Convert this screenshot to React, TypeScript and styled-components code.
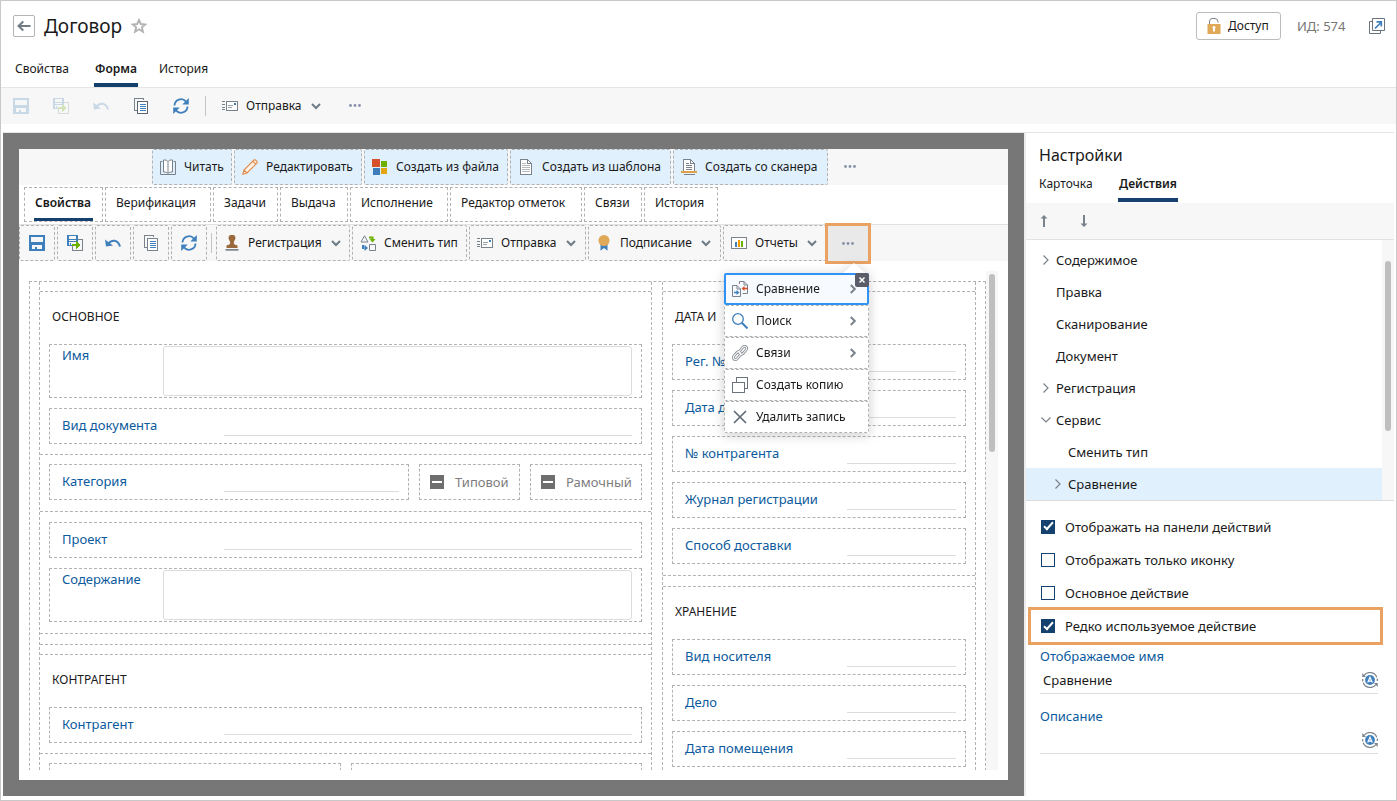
import React, { useState } from "react";
import styled, { createGlobalStyle, css } from "styled-components";

const Global = createGlobalStyle`
  *, *::before, *::after { box-sizing: border-box; }
  body { margin: 0; background: #fff; }
  body, button, input, textarea {
    font-family: "Noto Sans", "Open Sans", sans-serif;
    font-size: 13px;
    line-height: 18px;
    color: #1a1a1a;
  }
  h1, h2, h3, ul { margin: 0; padding: 0; font-weight: 400; }
  button { background: none; border: 0; padding: 0; cursor: pointer; }
`;

const dash = "1px dashed #b2b2b2";
const accent = "#14416d";
const mark = "#eaa263";
const gray = "#7a838b";
const blue = "#3f7fbb";

/* ---------- Icons ---------- */

const Svg = ({ size = 16, crisp, children }: { size?: number; crisp?: boolean; children: React.ReactNode }) => (
  <svg width={size} height={size} viewBox={`0 0 ${size} ${size}`} fill="none" aria-hidden="true" shapeRendering={crisp ? "crispEdges" : "auto"}>
    {children}
  </svg>
);

const SaveIcon = () => (
  <Svg crisp>
    <path fillRule="evenodd" fill={blue} d="M0 0H16V16H0ZM2 2V7H14V2ZM3 10V14H6V12H8V14H13V10Z" />
  </Svg>
);

const SaveNextIcon = () => (
  <Svg crisp>
    <path fillRule="evenodd" fill={blue} d="M0 0H11V7H9V5H2V6H9V7H2V10H5V11H0ZM2 1V4H9V1ZM3 8V10H4V8Z" />
    <path d="M10.500 4.500H15.500V15.500H5.500V11" stroke={gray} />
    <path fill="#6cb000" d="M5 9H9V6H10V7H11V8H12V9H13V11H12V12H11V13H10V14H9V11H5Z" />
  </Svg>
);

const UndoIcon = () => (
  <Svg>
    <path d="M3 9C6.500 4.200 13 4.200 15 11.500" stroke={blue} strokeWidth="2" />
    <path fill={blue} d="M0 4.500L1 11.500L8 10.500Z" />
  </Svg>
);

const CopyIcon = ({ filled }: { filled?: boolean }) => (
  <Svg crisp>
    <path d="M3.500 12.500H1.500V0.500H10.500V2" stroke={gray} />
    <path d="M4.500 3.500H14.500V15.500H4.500Z" fill="#fff" stroke={filled ? "#5b646c" : gray} />
    <path d="M7 6.500H13M7 8.500H13M7 10.500H13M7 12.500H13" stroke={blue} />
  </Svg>
);

const RefreshIcon = () => (
  <Svg>
    <path d="M1.500 7.500A6.500 6.500 0 0 1 13 3.600M14.500 8.500A6.500 6.500 0 0 1 3 12.400" stroke={blue} strokeWidth="1.800" />
    <path fill={blue} d="M15.800 0V6.500H9.300ZM0.200 16V9.500H6.700Z" />
  </Svg>
);

const SendIcon = () => (
  <Svg crisp>
    <path d="M0 3.500H3M0 6.500H3M0 9.500H3M0 11.500H3" stroke={gray} />
    <path d="M4.500 3.500H15.500V12.500H4.500Z" stroke={gray} fill="#fff" />
    <path d="M6 7.500H11M6 9.500H10" stroke="#9aa2a9" />
    <path d="M12 5H14V7H12Z" fill={blue} />
  </Svg>
);

const BookIcon = () => (
  <Svg>
    <path d="M2.500 2.500H0.500V15.500H15.500V2.500H13.500" stroke={gray} />
    <path d="M3.500 1C5.500 0.800 7.200 1.300 8 2.500C8.800 1.300 10.500 0.800 12.500 1V13C10.500 12.800 8.800 13.300 8 14.500C7.200 13.300 5.500 12.800 3.500 13Z" fill="#fff" stroke={gray} />
    <path d="M8 2.500V14.500" stroke={gray} />
  </Svg>
);

const PencilIcon = () => (
  <Svg>
    <path d="M0.800 15.200L2 11L12 1C13 0 15.800 2.800 15 4L5 14ZM2 11L5 14M11 2.500L13.800 5" stroke="#e08a4b" strokeWidth="1.100" fill="#fff3e6" />
  </Svg>
);

const FileTilesIcon = () => (
  <Svg crisp>
    <path fill="#d6502c" d="M0 0H8V8H0Z" />
    <path fill="#6cb000" d="M9 2H15V8H9Z" />
    <path fill="#3d7dbb" d="M1 9H8V16H1Z" />
    <path fill="#e2a612" d="M9 9H15V15H9Z" />
  </Svg>
);

const TemplateIcon = () => (
  <Svg crisp>
    <path d="M2.500 0.500H9.500L13.500 4.500V15.500H2.500Z" fill="#fff" stroke={gray} />
    <path d="M9.500 0.500V4.500H13.500" stroke={gray} />
    <path d="M4 4.500H8M4 6.500H12M4 8.500H12M4 10.500H12M4 12.500H12" stroke="#b3b9be" />
  </Svg>
);

const ScannerIcon = () => (
  <Svg crisp>
    <path d="M2.500 12V0.500H9.500L13.500 4.500V12M2.500 15.500H13.500" stroke={gray} fill="#fff" />
    <path d="M9.500 0.500V4.500H13.500" stroke={gray} />
    <path d="M5 4.500H8M5 6.500H11M5 8.500H11M5 10.500H11" stroke={gray} />
    <path fill="#e0a04a" d="M0 12H16V14H0Z" />
  </Svg>
);

const StampIcon = () => (
  <Svg>
    <path fill="#9b6a3c" d="M4.500 3A3 2.800 0 0 1 11.500 3C11.500 5 9.800 5.500 9.800 8C9.800 9.500 12 10 13.500 10.500V13H2.500V10.500C4 10 6.200 9.500 6.200 8C6.200 5.500 4.500 5 4.500 3Z" />
    <path fill={gray} d="M1.500 14H14.500V15.700H1.500Z" />
  </Svg>
);

const ChangeTypeIcon = () => (
  <Svg>
    <path d="M4.500 0.800L8 7H1Z" stroke={gray} />
    <path d="M9.500 9.500H15.500V15.500H9.500Z" stroke={gray} />
    <path d="M9 2.500H12.500V4.500" stroke="#6cb000" strokeWidth="2" />
    <path d="M9.500 4H15.500L12.500 7.500Z" fill="#6cb000" />
    <path d="M3 10V13H4.500" stroke={blue} strokeWidth="2" />
    <path d="M4.500 9.800V16L8 13Z" fill={blue} />
  </Svg>
);

const RibbonIcon = () => (
  <Svg>
    <path fill={blue} d="M4.500 9H11.500V15.800L8 13L4.500 15.800Z" />
    <circle cx="8" cy="5.500" r="5.500" fill="#e0a957" />
  </Svg>
);

const ReportIcon = () => (
  <Svg crisp>
    <path d="M0.500 2.500H15.500V13.500H0.500Z" fill="#fff" stroke={gray} />
    <path fill={blue} d="M4 7H6V12H4Z" />
    <path fill="#f19a00" d="M7 5H9V12H7Z" />
    <path fill="#6cb000" d="M10 6H12V12H10Z" />
  </Svg>
);

const CompareIcon = () => (
  <Svg>
    <path d="M0.500 4.500H5L8.500 8V15.500H0.500ZM5 4.500V8H8.500" stroke={gray} />
    <path d="M7.500 3V0.500H12L15.500 4V12.500H10.500M12 0.500V4H15.500" stroke={gray} />
    <path d="M2 11.500H5" stroke={blue} strokeWidth="1.600" />
    <path d="M4.500 9L7.500 11.500L4.500 14Z" fill={blue} />
    <path d="M12 7.500H16" stroke="#d6502c" strokeWidth="1.600" />
    <path d="M12.500 5L9.500 7.500L12.500 10Z" fill="#d6502c" />
  </Svg>
);

const SearchIcon = () => (
  <Svg>
    <circle cx="6" cy="6" r="5.300" stroke={blue} strokeWidth="1.300" />
    <path d="M9.800 9.800L15.500 15.500" stroke={blue} strokeWidth="2" />
  </Svg>
);

const LinkIcon = () => (
  <Svg>
    <g stroke="#8b9197" strokeWidth="2.800">
      <rect x="6.500" y="3.200" width="9" height="4.200" rx="2.100" transform="rotate(-50 11 5.300)" />
      <rect x="0.500" y="8.600" width="9" height="4.200" rx="2.100" transform="rotate(-50 5 10.700)" />
    </g>
    <g stroke="#fff" strokeWidth="1">
      <rect x="6.500" y="3.200" width="9" height="4.200" rx="2.100" transform="rotate(-50 11 5.300)" />
      <rect x="0.500" y="8.600" width="9" height="4.200" rx="2.100" transform="rotate(-50 5 10.700)" />
    </g>
  </Svg>
);

const DuplicateIcon = () => (
  <Svg crisp>
    <path d="M4.500 5V0.500H15.500V11.500H12M0.500 5.500H12.500V15.500H0.500Z" stroke="#6b747c" />
  </Svg>
);

const CrossIcon = () => (
  <Svg>
    <path d="M2 2L14 14M14 2L2 14" stroke="#5f6b75" strokeWidth="1.700" />
  </Svg>
);

const LockIcon = () => (
  <Svg>
    <path d="M3.500 6V4Q3.500 0.500 6 0.500H9Q12 0.500 12 4V4.500" stroke={gray} />
    <path fill="#e0a957" d="M1.500 6H14.500V16H1.500Z" />
    <path fill="#fff" d="M6.500 9.500A1.500 1.500 0 1 1 9 10.800V13.500H7V10.800Z" />
  </Svg>
);

const OpenIcon = () => (
  <Svg>
    <path d="M3 3.500H0.500V15.500H11.500V13M3.500 0.500H15.500V12.500H3.500Z" stroke="#6b747c" />
    <path d="M6 10.500L12 4.500M7.500 3.800H12.300V8.500" stroke={blue} strokeWidth="1.700" />
  </Svg>
);

const StarIcon = () => (
  <Svg>
    <path d="M8 2L9.800 6L14.200 6.500L10.900 9.300L11.900 13.700L8 11.300L4.100 13.700L5.100 9.300L1.800 6.500L6.200 6Z" stroke="#b3b3b3" strokeWidth="1.900" />
  </Svg>
);

const BackIcon = () => (
  <Svg>
    <path d="M2 8H14.500M7.300 3.500L2.500 8L7.300 12.500" stroke="#6f7b85" strokeWidth="2" />
  </Svg>
);

const ArrowIcon = ({ down }: { down?: boolean }) => (
  <svg width="8" height="12" viewBox="0 0 8 12" aria-hidden="true">
    <path fill={gray} d={down ? "M3 0H5V8.500H7.500L4 12L0.500 8.500H3Z" : "M3 12H5V3.500H7.500L4 0L0.500 3.500H3Z"} />
  </svg>
);

const LocalizeIcon = () => (
  <Svg>
    <circle cx="8" cy="8" r="4.900" fill={blue} />
    <path d="M5.700 10.500L8 5.300L10.300 10.500M6.600 9.200H9.400" stroke="#fff" strokeWidth="1.200" />
    <path d="M2 3.500A7.400 7.400 0 0 1 14.800 5.200M14 12.500A7.400 7.400 0 0 1 1.200 10.800M0.700 7V9.500M15.300 6.500V9" stroke={gray} strokeWidth="1.200" />
    <path fill={gray} d="M0.300 1V5H4ZM15.700 15V11H12Z" />
  </Svg>
);

const ChevronDown = () => (
  <svg width="12" height="8" viewBox="0 0 12 8" fill="none" aria-hidden="true">
    <path d="M2 2L6 6L10 2" stroke="#6f7b85" strokeWidth="2" />
  </svg>
);

const ChevronRight = ({ thin }: { thin?: boolean }) => (
  <svg width="8" height="12" viewBox="0 0 8 12" fill="none" aria-hidden="true">
    <path d={thin ? "M1.500 1.500L6 6L1.500 10.500" : "M1.800 2L5.800 6L1.800 10"} stroke={gray} strokeWidth={thin ? 1.2 : 2} />
  </svg>
);

const ThinDown = () => (
  <svg width="10" height="8" viewBox="0 0 10 8" fill="none" aria-hidden="true">
    <path d="M0.500 1.500L5 6L9.500 1.500" stroke={gray} strokeWidth="1.200" />
  </svg>
);

const Dots = () => (
  <svg width="12" height="4" viewBox="0 0 12 4" aria-hidden="true">
    <g fill="#8791a8">
      <circle cx="1.500" cy="1.500" r="1.400" />
      <circle cx="6" cy="1.500" r="1.400" />
      <circle cx="10.500" cy="1.500" r="1.400" />
    </g>
  </svg>
);

/* ---------- Page shell ---------- */

const Page = styled.div`
  height: 100vh;
  display: flex;
  flex-direction: column;
  border: 1px solid #c8c8c8;
`;

const Header = styled.header`
  display: flex;
  align-items: center;
  height: 50px;
  flex: none;
  padding: 0 11px 0 12px;
`;

const BackButton = styled.button`
  display: grid;
  place-items: center;
  width: 22px;
  height: 22px;
  border: 1px solid #b4b4b4;
  border-radius: 2px;
`;

const Title = styled.h1`
  margin: 0 9px;
  font-size: 19px;
  line-height: 28px;
`;

const IconOnly = styled.button`
  display: grid;
`;

const HeaderSide = styled.div`
  display: flex;
  align-items: center;
  margin-left: auto;
`;

const AccessButton = styled.button`
  display: flex;
  align-items: center;
  gap: 6px;
  height: 28px;
  width: 85px;
  padding-left: 9px;
  border: 1px solid #bcbcbc;
  border-radius: 3px;
  font-size: 12px;
`;

const RecordId = styled.span`
  width: 72px;
  margin-left: 16px;
  color: #757575;
`;

const NavTabs = styled.nav`
  display: flex;
  flex: none;
  gap: 21px;
  padding-left: 14px;
  height: 37px;
  border-bottom: 1px solid #e5e5e5;
`;

const NavTab = styled.button<{ $active?: boolean; $w?: number }>`
  width: ${(p) => p.$w}px;
  height: 36px;
  padding-top: ${(p) => (p.$active ? 4 : 0)}px;
  border-bottom: ${(p) => (p.$active ? `4px solid ${accent}` : "0")};
  text-align: ${(p) => (p.$active ? "center" : "left")};
  font-weight: ${(p) => (p.$active ? 600 : 400)};
  font-size: 12px;
  white-space: nowrap;
`;

const Toolbar = styled.div<{ $gap: number; $center?: boolean; $line?: boolean }>`
  display: flex;
  flex: none;
  align-items: stretch;
  justify-content: ${(p) => (p.$center ? "center" : "flex-start")};
  gap: ${(p) => p.$gap}px;
  height: ${(p) => (p.$line ? 37 : 36)}px;
  border-top: ${(p) => (p.$line ? "1px solid #e2e2e2" : "0")};
  background: #f7f7f7;
`;

const Separator = styled.span`
  width: 1px;
  height: 20px;
  margin: 0 2px;
  align-self: center;
  background: #c4c4c4;
`;

const PageToolbar = styled(Toolbar)`
  padding-left: 2px;
  ${Separator} { margin-right: 4px; }
`;

const ToolButton = styled.button<{ $w?: number; $dashed?: boolean; $primary?: boolean; $disabled?: boolean }>`
  display: flex;
  flex: none;
  align-items: center;
  justify-content: ${(p) => (p.$w ? "flex-start" : "center")};
  gap: 8px;
  width: ${(p) => p.$w ?? 36}px;
  padding: ${(p) => (p.$w ? "0 9px 0 7px" : "0")};
  border: 1px ${(p) => (p.$dashed ? "dashed #b2b2b2" : "solid transparent")};
  border-radius: 2px;
  background: ${(p) => (p.$primary ? "#e1f0fd" : "transparent")};
  font-size: 12px;
  white-space: nowrap;
  > svg { flex: none; opacity: ${(p) => (p.$disabled ? 0.25 : 1)}; }
  > svg:nth-of-type(2) { margin-left: auto; }
`;

const MoreButton = styled.button<{ $w?: number }>`
  display: flex;
  align-items: center;
  width: ${(p) => p.$w ?? 40}px;
  padding: 0 14px;
`;

const Workspace = styled.main`
  flex: 1;
  min-height: 0;
  display: flex;
  margin: 8px 2px 4px;
  border-top: 1px solid #e5e5e5;
`;

/* ---------- Designer ---------- */

const Designer = styled.section`
  flex: 1;
  min-width: 0;
  display: flex;
  padding: 16px;
  background: #777;
`;

const Sheet = styled.div`
  flex: 1;
  min-width: 0;
  display: flex;
  flex-direction: column;
  background: #fff;
`;

const CardTabs = styled.div`
  display: flex;
  flex: none;
  gap: 2px;
  height: 39px;
  padding: 2px 5px;
`;

const CardTab = styled.button<{ $w: number; $active?: boolean }>`
  position: relative;
  flex: none;
  width: ${(p) => p.$w}px;
  padding: 0 0 4px 10px;
  border: ${dash};
  text-align: left;
  font-size: 12px;
  font-weight: ${(p) => (p.$active ? 600 : 400)};
  white-space: nowrap;
  ${(p) => p.$active && css`
    &::after {
      content: "";
      position: absolute;
      left: 9px;
      right: 9px;
      bottom: 0;
      height: 3px;
      background: ${accent};
    }
  `}
`;

const MoreAnchor = styled.div`
  position: relative;
  display: flex;
  height: 35px;
  align-self: flex-end;
  background: #e9e9e9;
  outline: 3px solid ${mark};
`;

const Menu = styled.ul`
  position: absolute;
  z-index: 2;
  top: calc(100% + 12px);
  right: -1px;
  width: 145px;
  list-style: none;
  background: #fff;
  filter: drop-shadow(0 2px 6px rgba(0, 0, 0, 0.2));
  &::before {
    content: "";
    position: absolute;
    right: 4px;
    top: -10px;
    border: 11px solid transparent;
    border-top: 0;
    border-bottom: 10px solid #fff;
  }
`;

const MenuItem = styled.button<{ $selected?: boolean }>`
  position: relative;
  display: flex;
  align-items: center;
  gap: 8px;
  width: 100%;
  height: 32px;
  padding: ${(p) => (p.$selected ? "0 10px 0 6px" : "0 11px 0 7px")};
  border: ${(p) => (p.$selected ? "2px solid #2f92f5" : dash)};
  border-radius: 2px;
  background: ${(p) => (p.$selected ? "#f7fbff" : "#fff")};
  font-size: 12px;
  white-space: nowrap;
  > svg:nth-of-type(2) { margin-left: auto; }
`;

const MenuClose = styled.button`
  position: absolute;
  top: 0;
  right: 0;
  display: grid;
  place-items: center;
  width: 14px;
  height: 14px;
  border-radius: 2px;
  background: #5b5d6b;
`;

const ScrollArea = styled.div`
  flex: 1;
  min-height: 0;
  display: flex;
  margin: 10px;
`;

const Clip = styled.div`
  flex: 1;
  min-width: 0;
  overflow: hidden;
  padding-top: 10px;
`;

const Track = styled.div`
  width: 12px;
  flex: none;
  background: #f7f7f7;
`;

const Thumb = styled.div<{ $top: number; $h: number }>`
  width: 6px;
  height: ${(p) => p.$h}px;
  margin: ${(p) => p.$top}px 3px 0;
  border-radius: 3px;
  background: #bfbfbf;
`;

const FormCanvas = styled.form`
  display: grid;
  grid-template-columns: minmax(0, 1fr) 314px;
  gap: 10px;
  padding: 0 9px;
  border: ${dash};
`;

const Column = styled.div`
  padding-top: 9px;
  border: ${dash};
  border-width: 0 1px;
`;

const Group = styled.section<{ $top?: number; $bottom?: number }>`
  display: flex;
  flex-direction: column;
  gap: 10px;
  padding: ${(p) => p.$top ?? 0}px 9px ${(p) => p.$bottom ?? 11}px;
  border-top: ${dash};
`;

const Spacer = styled.div<{ $h: number }>`
  height: ${(p) => p.$h}px;
  border-top: ${dash};
`;

const GroupTitle = styled.h3`
  height: 42px;
  padding: 16px 3px 0;
  font-size: 12px;
  line-height: 18px;
`;

const FieldLine = styled.div`
  display: flex;
  gap: 10px;
`;

const Field = styled.div<{ $area?: boolean }>`
  width: 100%;
  min-width: 0;
  display: flex;
  height: ${(p) => (p.$area ? 54 : 36)}px;
  padding: ${(p) => (p.$area ? "1px 9px 1px 12px" : "0 9px 7px 12px")};
  border: ${dash};
`;

const FieldLabel = styled.label<{ $w: number; $area?: boolean }>`
  flex: none;
  width: ${(p) => p.$w}px;
  padding-top: ${(p) => (p.$area ? 0 : 7)}px;
  color: #0b5a9d;
  white-space: nowrap;
`;

const LineInput = styled.input`
  flex: 1;
  min-width: 0;
  padding: 0;
  border: 0;
  border-bottom: 1px solid #dcdcdc;
  background: none;
  outline: 0;
`;

const Area = styled.textarea`
  flex: 1;
  min-width: 0;
  border: 1px solid #dcdcdc;
  border-radius: 3px;
  resize: none;
  outline: 0;
`;

const TriState = styled.label<{ $w: number }>`
  display: flex;
  flex: none;
  align-items: center;
  gap: 11px;
  width: ${(p) => p.$w}px;
  height: 36px;
  padding-left: 10px;
  border: ${dash};
  color: #7d7d7d;
  white-space: nowrap;
`;

const TriBox = styled.input`
  appearance: none;
  display: grid;
  place-items: center;
  width: 14px;
  height: 14px;
  margin: 0;
  background: #6e6e6e;
  &::after { content: ""; width: 10px; height: 2px; background: #fff; }
`;

/* ---------- Settings ---------- */

const Settings = styled.aside`
  width: 370px;
  flex: none;
  display: flex;
  flex-direction: column;
  border-left: 2px solid #ececec;
`;

const SettingsTitle = styled.h2`
  height: 33px;
  padding: 11px 13px 0;
  font-size: 16px;
  line-height: 22px;
`;

const SettingsTabs = styled(NavTabs)`
  border: 0;
  padding-left: 13px;
`;

const OrderBar = styled.div`
  display: flex;
  flex: none;
  align-items: center;
  gap: 32px;
  height: 37px;
  padding-left: 14px;
  background: #f7f7f7;
  border-bottom: 1px solid #e2e2e2;
`;

const TreeArea = styled.div`
  display: flex;
  flex: none;
  border-bottom: 1px solid #dcdcdc;
`;

const Tree = styled.ul`
  flex: 1;
  padding-top: 4px;
  list-style: none;
`;

const TreeNode = styled.button<{ $level?: number; $selected?: boolean }>`
  display: flex;
  align-items: center;
  width: 100%;
  height: 32px;
  padding-left: ${(p) => 14 + (p.$level ?? 0) * 12}px;
  background: ${(p) => (p.$selected ? "#e1f0fd" : "none")};
`;

const TreeMark = styled.span`
  display: grid;
  place-items: center;
  width: 12px;
  margin-right: 4px;
`;

const Options = styled.div`
  display: flex;
  flex-direction: column;
  padding: 9px 11px 0 2px;
`;

const Option = styled.label<{ $marked?: boolean }>`
  display: flex;
  align-items: center;
  gap: 10px;
  height: ${(p) => (p.$marked ? 38 : 33)}px;
  margin-top: ${(p) => (p.$marked ? -2 : 0)}px;
  padding-left: ${(p) => (p.$marked ? 10 : 13)}px;
  border: ${(p) => (p.$marked ? `3px solid ${mark}` : "0")};
`;

const Check = styled.input`
  appearance: none;
  display: grid;
  place-items: center;
  width: 14px;
  height: 14px;
  margin: 0;
  border: 1px solid ${accent};
  &:checked { background: ${accent}; }
  &:checked::after {
    content: "";
    width: 5px;
    height: 10px;
    margin-top: -3px;
    border: solid #fff;
    border-width: 0 2px 2px 0;
    transform: rotate(42deg);
  }
`;

const Property = styled.div`
  display: flex;
  flex-direction: column;
  height: 60px;
  padding: 2px 16px 0 14px;
  > label { color: #0b5a9d; }
`;

const PropertyValue = styled.div`
  display: flex;
  align-items: center;
  height: 29px;
  padding: 2px 0 0 3px;
  border-bottom: 1px solid #dcdcdc;
  input { flex: 1; min-width: 0; border: 0; padding: 0; outline: 0; background: none; }
`;

/* ---------- Content ---------- */

const cardTabs: [string, number][] = [
  ["Свойства", 79], ["Верификация", 106], ["Задачи", 65], ["Выдача", 68],
  ["Исполнение", 98], ["Редактор отметок", 132], ["Связи", 58], ["История", 74],
];

const createActions: [string, number, React.ReactNode][] = [
  ["Читать", 80, <BookIcon />],
  ["Редактировать", 128, <PencilIcon />],
  ["Создать из файла", 144, <FileTilesIcon />],
  ["Создать из шаблона", 161, <TemplateIcon />],
  ["Создать со сканера", 155, <ScannerIcon />],
];

const cardActions: [string, number, React.ReactNode, boolean][] = [
  ["Регистрация", 134, <StampIcon />, true],
  ["Сменить тип", 115, <ChangeTypeIcon />, false],
  ["Отправка", 117, <SendIcon />, true],
  ["Подписание", 133, <RibbonIcon />, true],
  ["Отчеты", 103, <ReportIcon />, true],
];

const menuItems: [string, React.ReactNode, boolean][] = [
  ["Сравнение", <CompareIcon />, true],
  ["Поиск", <SearchIcon />, true],
  ["Связи", <LinkIcon />, true],
  ["Создать копию", <DuplicateIcon />, false],
  ["Удалить запись", <CrossIcon />, false],
];

const treeNodes: [string, number, React.ReactNode][] = [
  ["Содержимое", 0, <ChevronRight thin />],
  ["Правка", 0, null],
  ["Сканирование", 0, null],
  ["Документ", 0, null],
  ["Регистрация", 0, <ChevronRight thin />],
  ["Сервис", 0, <ThinDown />],
  ["Сменить тип", 1, null],
  ["Сравнение", 1, <ChevronRight thin />],
];

const FormField = ({ id, label, area, w = 162 }: { id: string; label: string; area?: boolean; w?: number }) => (
  <Field $area={area}>
    <FieldLabel htmlFor={id} $w={area ? 101 : w} $area={area}>{label}</FieldLabel>
    {area ? <Area id={id} /> : <LineInput id={id} type="text" />}
  </Field>
);

export default function App() {
  const [options, setOptions] = useState([
    { label: "Отображать на панели действий", on: true },
    { label: "Отображать только иконку", on: false },
    { label: "Основное действие", on: false },
    { label: "Редко используемое действие", on: true, marked: true },
  ]);
  const toggle = (i: number) => setOptions(options.map((o, n) => (n === i ? { ...o, on: !o.on } : o)));

  return (
    <Page>
      <Global />
      <Header>
        <BackButton aria-label="Назад"><BackIcon /></BackButton>
        <Title>Договор</Title>
        <IconOnly aria-label="В избранное"><StarIcon /></IconOnly>
        <HeaderSide>
          <AccessButton><LockIcon />Доступ</AccessButton>
          <RecordId>ИД: 574</RecordId>
          <IconOnly aria-label="Открыть в новом окне"><OpenIcon /></IconOnly>
        </HeaderSide>
      </Header>
      <NavTabs>
        <NavTab $w={58}>Свойства</NavTab>
        <NavTab $w={44} $active>Форма</NavTab>
        <NavTab $w={50}>История</NavTab>
      </NavTabs>
      <PageToolbar $gap={4}>
        <ToolButton $disabled aria-label="Сохранить"><SaveIcon /></ToolButton>
        <ToolButton $disabled aria-label="Сохранить и закрыть"><SaveNextIcon /></ToolButton>
        <ToolButton $disabled aria-label="Отменить"><UndoIcon /></ToolButton>
        <ToolButton aria-label="Копировать"><CopyIcon filled /></ToolButton>
        <ToolButton aria-label="Обновить"><RefreshIcon /></ToolButton>
        <Separator />
        <ToolButton $w={117}><SendIcon />Отправка<ChevronDown /></ToolButton>
        <MoreButton aria-label="Еще"><Dots /></MoreButton>
      </PageToolbar>

      <Workspace>
        <Designer>
          <Sheet>
            <Toolbar $gap={2} $center>
              {createActions.map(([text, w, icon]) => (
                <ToolButton key={text} $w={w} $dashed $primary>{icon}{text}</ToolButton>
              ))}
              <MoreButton $w={45} aria-label="Еще"><Dots /></MoreButton>
            </Toolbar>
            <CardTabs>
              {cardTabs.map(([text, w], i) => (
                <CardTab key={text} $w={w} $active={i === 0}>{text}</CardTab>
              ))}
            </CardTabs>
            <Toolbar $gap={2} $line>
              <ToolButton $dashed aria-label="Сохранить"><SaveIcon /></ToolButton>
              <ToolButton $dashed aria-label="Сохранить и закрыть"><SaveNextIcon /></ToolButton>
              <ToolButton $dashed aria-label="Отменить"><UndoIcon /></ToolButton>
              <ToolButton $dashed aria-label="Копировать"><CopyIcon /></ToolButton>
              <ToolButton $dashed aria-label="Обновить"><RefreshIcon /></ToolButton>
              <Separator />
              {cardActions.map(([text, w, icon, drop]) => (
                <ToolButton key={text} $w={w} $dashed>{icon}{text}{drop && <ChevronDown />}</ToolButton>
              ))}
              <MoreAnchor>
                <MoreButton aria-label="Еще"><Dots /></MoreButton>
                <Menu>
                  {menuItems.map(([text, icon, sub], i) => (
                    <li key={text}>
                      <MenuItem $selected={i === 0}>{icon}{text}{sub && <ChevronRight />}</MenuItem>
                    </li>
                  ))}
                  <li>
                    <MenuClose aria-label="Убрать">
                      <svg width="8" height="8" viewBox="0 0 8 8" aria-hidden="true">
                        <path d="M1.500 1.500L6.500 6.500M6.500 1.500L1.500 6.500" stroke="#fff" strokeWidth="1.500" />
                      </svg>
                    </MenuClose>
                  </li>
                </Menu>
              </MoreAnchor>
            </Toolbar>

            <ScrollArea>
              <Clip>
                <FormCanvas>
                  <Column>
                    <Group $bottom={10}>
                      <GroupTitle>ОСНОВНОЕ</GroupTitle>
                      <FormField id="name" label="Имя" area />
                      <FormField id="kind" label="Вид документа" />
                    </Group>
                    <Group $top={9}>
                      <FieldLine>
                        <FormField id="category" label="Категория" />
                        <TriState $w={101}><TriBox type="checkbox" />Типовой</TriState>
                        <TriState $w={112}><TriBox type="checkbox" />Рамочный</TriState>
                      </FieldLine>
                    </Group>
                    <Group $top={10}>
                      <FormField id="project" label="Проект" />
                      <FormField id="summary" label="Содержание" area />
                    </Group>
                    <Spacer $h={11} />
                    <Spacer $h={10} />
                    <Group $bottom={10}>
                      <GroupTitle>КОНТРАГЕНТ</GroupTitle>
                      <FormField id="party" label="Контрагент" />
                    </Group>
                    <Group $top={9}>
                      <FieldLine>
                        <Field />
                        <Field />
                      </FieldLine>
                    </Group>
                  </Column>
                  <Column>
                    <Group>
                      <GroupTitle>ДАТА И</GroupTitle>
                      <FormField id="reg" label="Рег. №" />
                      <FormField id="date" label="Дата д" />
                      <FormField id="num" label="№ контрагента" />
                      <FormField id="journal" label="Журнал регистрации" />
                      <FormField id="delivery" label="Способ доставки" />
                    </Group>
                    <Spacer $h={11} />
                    <Group>
                      <GroupTitle>ХРАНЕНИЕ</GroupTitle>
                      <FormField id="media" label="Вид носителя" />
                      <FormField id="case" label="Дело" />
                      <FormField id="placed" label="Дата помещения" />
                    </Group>
                  </Column>
                </FormCanvas>
              </Clip>
              <Track><Thumb $top={3} $h={178} /></Track>
            </ScrollArea>
          </Sheet>
        </Designer>

        <Settings>
          <SettingsTitle>Настройки</SettingsTitle>
          <SettingsTabs>
            <NavTab $w={58}>Карточка</NavTab>
            <NavTab $w={60} $active>Действия</NavTab>
          </SettingsTabs>
          <OrderBar>
            <IconOnly aria-label="Выше"><ArrowIcon /></IconOnly>
            <IconOnly aria-label="Ниже"><ArrowIcon down /></IconOnly>
          </OrderBar>
          <TreeArea>
            <Tree>
              {treeNodes.map(([text, level, icon], i) => (
                <li key={text}>
                  <TreeNode $level={level} $selected={i === treeNodes.length - 1}>
                    <TreeMark>{icon}</TreeMark>{text}
                  </TreeNode>
                </li>
              ))}
            </Tree>
            <Track><Thumb $top={21} $h={170} /></Track>
          </TreeArea>
          <Options>
            {options.map((o, i) => (
              <Option key={o.label} $marked={o.marked}>
                <Check type="checkbox" checked={o.on} onChange={() => toggle(i)} />
                {o.label}
              </Option>
            ))}
          </Options>
          <Property>
            <label htmlFor="caption">Отображаемое имя</label>
            <PropertyValue>
              <input id="caption" type="text" defaultValue="Сравнение" />
              <IconOnly aria-label="Локализовать имя"><LocalizeIcon /></IconOnly>
            </PropertyValue>
          </Property>
          <Property>
            <label htmlFor="hint">Описание</label>
            <PropertyValue>
              <input id="hint" type="text" />
              <IconOnly aria-label="Локализовать описание"><LocalizeIcon /></IconOnly>
            </PropertyValue>
          </Property>
        </Settings>
      </Workspace>
    </Page>
  );
}
